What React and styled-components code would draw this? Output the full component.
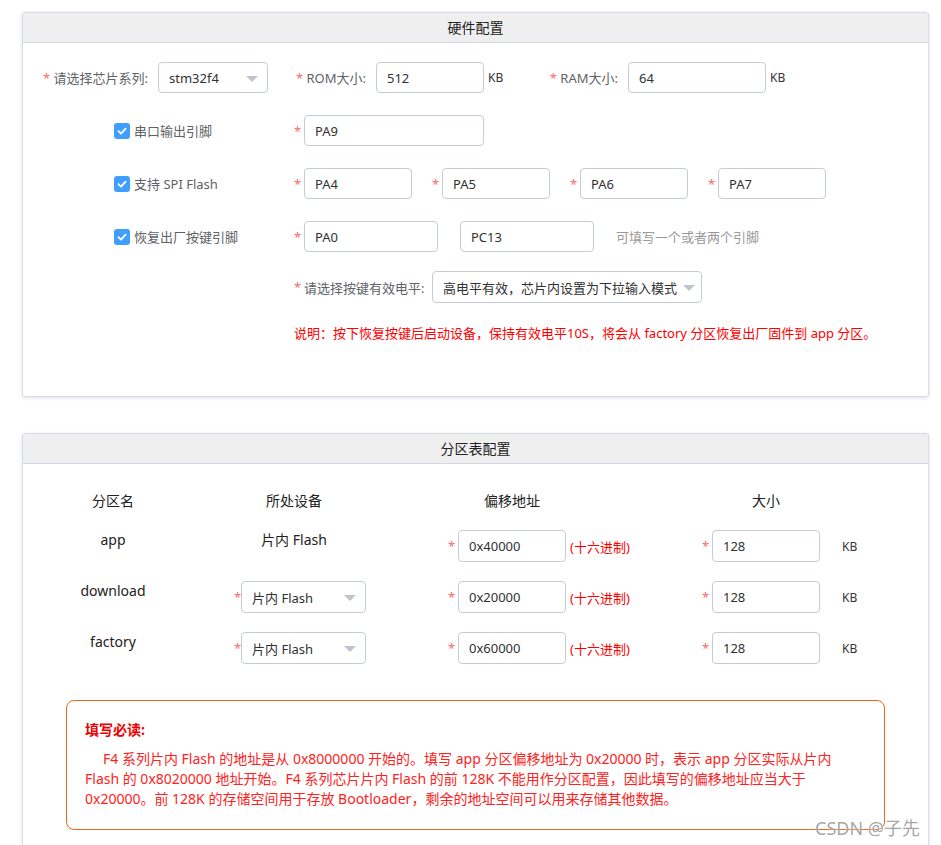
import styled, { createGlobalStyle } from "styled-components";

const GlobalStyle = createGlobalStyle`
  body {
    margin: 0;
    background: #fff;
    font-family: "Noto Sans", "Noto Sans CJK SC", sans-serif;
    color: #333;
  }
`;

function Checkbox() {
  return (
    <CheckBox>
      <svg width="12" height="12" viewBox="0 0 12 12">
        <path d="M2.5 6.2 L5 8.6 L9.6 3.6" fill="none" stroke="#fff" strokeWidth="1.8" strokeLinecap="round" strokeLinejoin="round" />
      </svg>
    </CheckBox>
  );
}

function FakeSelect({ value, width, height }) {
  return (
    <SelectBox $width={width} $height={height}>
      <span>{value}</span>
      <Arrow />
    </SelectBox>
  );
}

const partitions = [
  { name: "app", offset: "0x40000", fixed: true },
  { name: "download", offset: "0x20000" },
  { name: "factory", offset: "0x60000" },
];

function App() {
  return (
    <Page>
      <GlobalStyle />
      <Card>
        <CardHeader>硬件配置</CardHeader>
        <HwBody>
          <Row>
            <Label $width={135}>
              <Star>*</Star> 请选择芯片系列:
            </Label>
            <FakeSelect value="stm32f4" width={110} />
            <Label $width={108}>
              <Star>*</Star> ROM大小:
            </Label>
            <Input $width={108} defaultValue="512" readOnly />
            <Unit>KB</Unit>
            <Label $width={125}>
              <Star>*</Star> RAM大小:
            </Label>
            <Input $width={138} defaultValue="64" readOnly />
            <Unit>KB</Unit>
          </Row>

          <PinRow $top={22}>
            <CheckCell>
              <Checkbox />
              串口输出引脚
            </CheckCell>
            <Field>
              <Star $w={10}>*</Star>
              <Input $width={180} defaultValue="PA9" readOnly />
            </Field>
          </PinRow>

          <PinRow $top={22}>
            <CheckCell>
              <Checkbox />
              支持 SPI Flash
            </CheckCell>
            <Fields $gap={20}>
              {["PA4", "PA5", "PA6", "PA7"].map((p) => (
                <Field key={p}>
                  <Star $w={10}>*</Star>
                  <Input $width={108} defaultValue={p} readOnly />
                </Field>
              ))}
            </Fields>
          </PinRow>

          <PinRow $top={22}>
            <CheckCell>
              <Checkbox />
              恢复出厂按键引脚
            </CheckCell>
            <Fields $gap={22}>
              <Field>
                <Star $w={10}>*</Star>
                <Input $width={134} defaultValue="PA0" readOnly />
              </Field>
              <Input $width={134} defaultValue="PC13" readOnly />
              <Hint>可填写一个或者两个引脚</Hint>
            </Fields>
          </PinRow>

          <PinRow $top={19}>
            <CheckCell />
            <Field>
              <Star $w={10}>*</Star>
              <InlineLabel>请选择按键有效电平:</InlineLabel>
              <FakeSelect value="高电平有效，芯片内设置为下拉输入模式" width={270} height={32} />
            </Field>
          </PinRow>

          <PinRow $top={20}>
            <CheckCell />
            <Note>说明：按下恢复按键后启动设备，保持有效电平10S，将会从 factory 分区恢复出厂固件到 app 分区。</Note>
          </PinRow>
        </HwBody>
      </Card>

      <Card>
        <CardHeader>分区表配置</CardHeader>
        <PartBody>
          <PartGrid>
            <ColHead>分区名</ColHead>
            <ColHead>所处设备</ColHead>
            <ColHead>偏移地址</ColHead>
            <ColHead>大小</ColHead>

            {partitions.flatMap((p) => [
              <NameCell key={p.name + "n"}>{p.name}</NameCell>,
              p.fixed ? (
                <NameCell key={p.name + "d"}>片内 Flash</NameCell>
              ) : (
                <Cell key={p.name + "d"} $pad={31}>
                  <Star $w={7}>*</Star>
                  <FakeSelect value="片内 Flash" width={125} height={32} />
                </Cell>
              ),
              <Cell key={p.name + "o"} $pad={63}>
                <Star $w={10}>*</Star>
                <Input $width={108} $height={32} defaultValue={p.offset} readOnly />
                <HexNote>(十六进制)</HexNote>
              </Cell>,
              <Cell key={p.name + "s"} $pad={63}>
                <Star $w={10}>*</Star>
                <Input $width={108} $height={32} defaultValue="128" readOnly />
                <SizeUnit>KB</SizeUnit>
              </Cell>,
            ])}
          </PartGrid>

          <Notice>
            <NoticeTitle>填写必读:</NoticeTitle>
            <NoticeText>
              F4 系列片内 Flash 的地址是从 0x8000000 开始的。填写 app 分区偏移地址为 0x20000 时，表示 app 分区实际从片内
              <br />
              Flash 的 0x8020000 地址开始。F4 系列芯片片内 Flash 的前 128K 不能用作分区配置，因此填写的偏移地址应当大于
              <br />
              0x20000。前 128K 的存储空间用于存放 Bootloader，剩余的地址空间可以用来存储其他数据。
            </NoticeText>
          </Notice>
        </PartBody>
      </Card>

      <Watermark>CSDN @子先</Watermark>
    </Page>
  );
}

const Page = styled.div`
  position: relative;
  width: 907px;
  padding: 12px 0 0 22px;
`;

const Card = styled.section`
  background: #fff;
  border: 1px solid #d6dde7;
  border-radius: 3px;
  box-shadow: 0 1px 4px rgba(0, 0, 0, 0.12);

  & + & {
    margin-top: 36px;
  }
`;

const CardHeader = styled.div`
  height: 29px;
  line-height: 29px;
  text-align: center;
  font-size: 14px;
  color: #222;
  background: #efefef;
  border-bottom: 1px solid #d3dae5;
  border-radius: 3px 3px 0 0;
`;

const HwBody = styled.div`
  padding: 19px 0 53px;
`;

const Row = styled.div`
  display: flex;
  align-items: center;
  height: 31px;
`;

const PinRow = styled.div`
  display: flex;
  align-items: center;
  min-height: 20px;
  margin-top: ${(p) => p.$top}px;
  padding-left: 91px;
`;

const Label = styled.label`
  box-sizing: border-box;
  width: ${(p) => p.$width}px;
  padding-right: 10px;
  text-align: right;
  font-size: 13px;
  color: #606266;
  white-space: nowrap;
`;

const InlineLabel = styled.span`
  display: inline-block;
  width: 118px;
  margin-right: 10px;
  font-size: 13px;
  color: #606266;
  white-space: nowrap;
`;

const Star = styled.span`
  display: inline-block;
  width: ${(p) => (p.$w ? `${p.$w}px` : "auto")};
  color: #f56c6c;
  font-size: 13px;
`;

const Input = styled.input`
  box-sizing: border-box;
  width: ${(p) => p.$width}px;
  height: ${(p) => p.$height || 31}px;
  padding: 0 10px;
  border: 1px solid #c4ccd8;
  border-radius: 4px;
  font-family: inherit;
  font-size: 13px;
  color: #303133;
  background: #fff;
  outline: none;
`;

const Unit = styled.span`
  box-sizing: border-box;
  width: 19px;
  padding-left: 4px;
  font-size: 12px;
  color: #333;
`;

const SelectBox = styled.div`
  box-sizing: border-box;
  display: flex;
  align-items: center;
  justify-content: space-between;
  width: ${(p) => p.$width}px;
  height: ${(p) => p.$height || 31}px;
  padding: 0 9px 0 10px;
  border: 1px solid #c4ccd8;
  border-radius: 4px;
  font-size: 13px;
  color: #303133;
  white-space: nowrap;
`;

const Arrow = styled.span`
  flex-shrink: 0;
  width: 0;
  height: 0;
  margin-left: 6px;
  margin-top: 2px;
  border-left: 6px solid transparent;
  border-right: 6px solid transparent;
  border-top: 6px solid #c0c4cc;
`;

const CheckCell = styled.div`
  display: flex;
  align-items: center;
  gap: 4px;
  width: 180px;
  flex-shrink: 0;
  font-size: 13px;
  color: #606266;
`;

const CheckBox = styled.span`
  display: inline-flex;
  align-items: center;
  justify-content: center;
  width: 16px;
  height: 16px;
  border-radius: 3px;
  background: #409eff;
`;

const Fields = styled.div`
  display: flex;
  align-items: center;
  gap: ${(p) => p.$gap || 0}px;
`;

const Field = styled.div`
  display: flex;
  align-items: center;
`;

const Hint = styled.span`
  font-size: 13px;
  color: #999;
`;

const Note = styled.p`
  margin: 0;
  line-height: 20px;
  font-size: 13px;
  color: #f00;
`;

const PartBody = styled.div`
  padding: 27px 0 40px;
`;

const PartGrid = styled.div`
  display: grid;
  grid-template-columns: 180px 182px 254px 254px;
  row-gap: 19px;
  align-items: start;
`;

const ColHead = styled.div`
  text-align: center;
  font-size: 14px;
  line-height: 20px;
  color: #222;
`;

const NameCell = styled.div`
  text-align: center;
  font-size: 14px;
  line-height: 20px;
  color: #222;
`;

const Cell = styled.div`
  display: flex;
  align-items: center;
  padding-left: ${(p) => p.$pad}px;
`;

const HexNote = styled.span`
  margin-left: 4px;
  font-size: 13px;
  color: #f00;
`;

const SizeUnit = styled.span`
  margin-left: 22px;
  font-size: 12px;
  color: #333;
`;

const Notice = styled.div`
  margin: 36px 43px 0;
  padding: 19px 18px 20px;
  border: 1px solid #e6691e;
  border-radius: 8px;
  color: #f22;
`;

const NoticeTitle = styled.div`
  font-size: 14px;
  line-height: 20px;
  font-weight: bold;
  color: #e00;
`;

const NoticeText = styled.p`
  margin: 9px 0 0;
  font-size: 14px;
  line-height: 20px;
  text-indent: 18px;
  white-space: nowrap;
`;

const Watermark = styled.div`
  position: absolute;
  left: 815px;
  top: 814px;
  font-size: 18px;
  color: rgba(150, 150, 150, 0.85);
  text-shadow: 0 0 2px #fff;
  white-space: nowrap;
`;

export default App;
